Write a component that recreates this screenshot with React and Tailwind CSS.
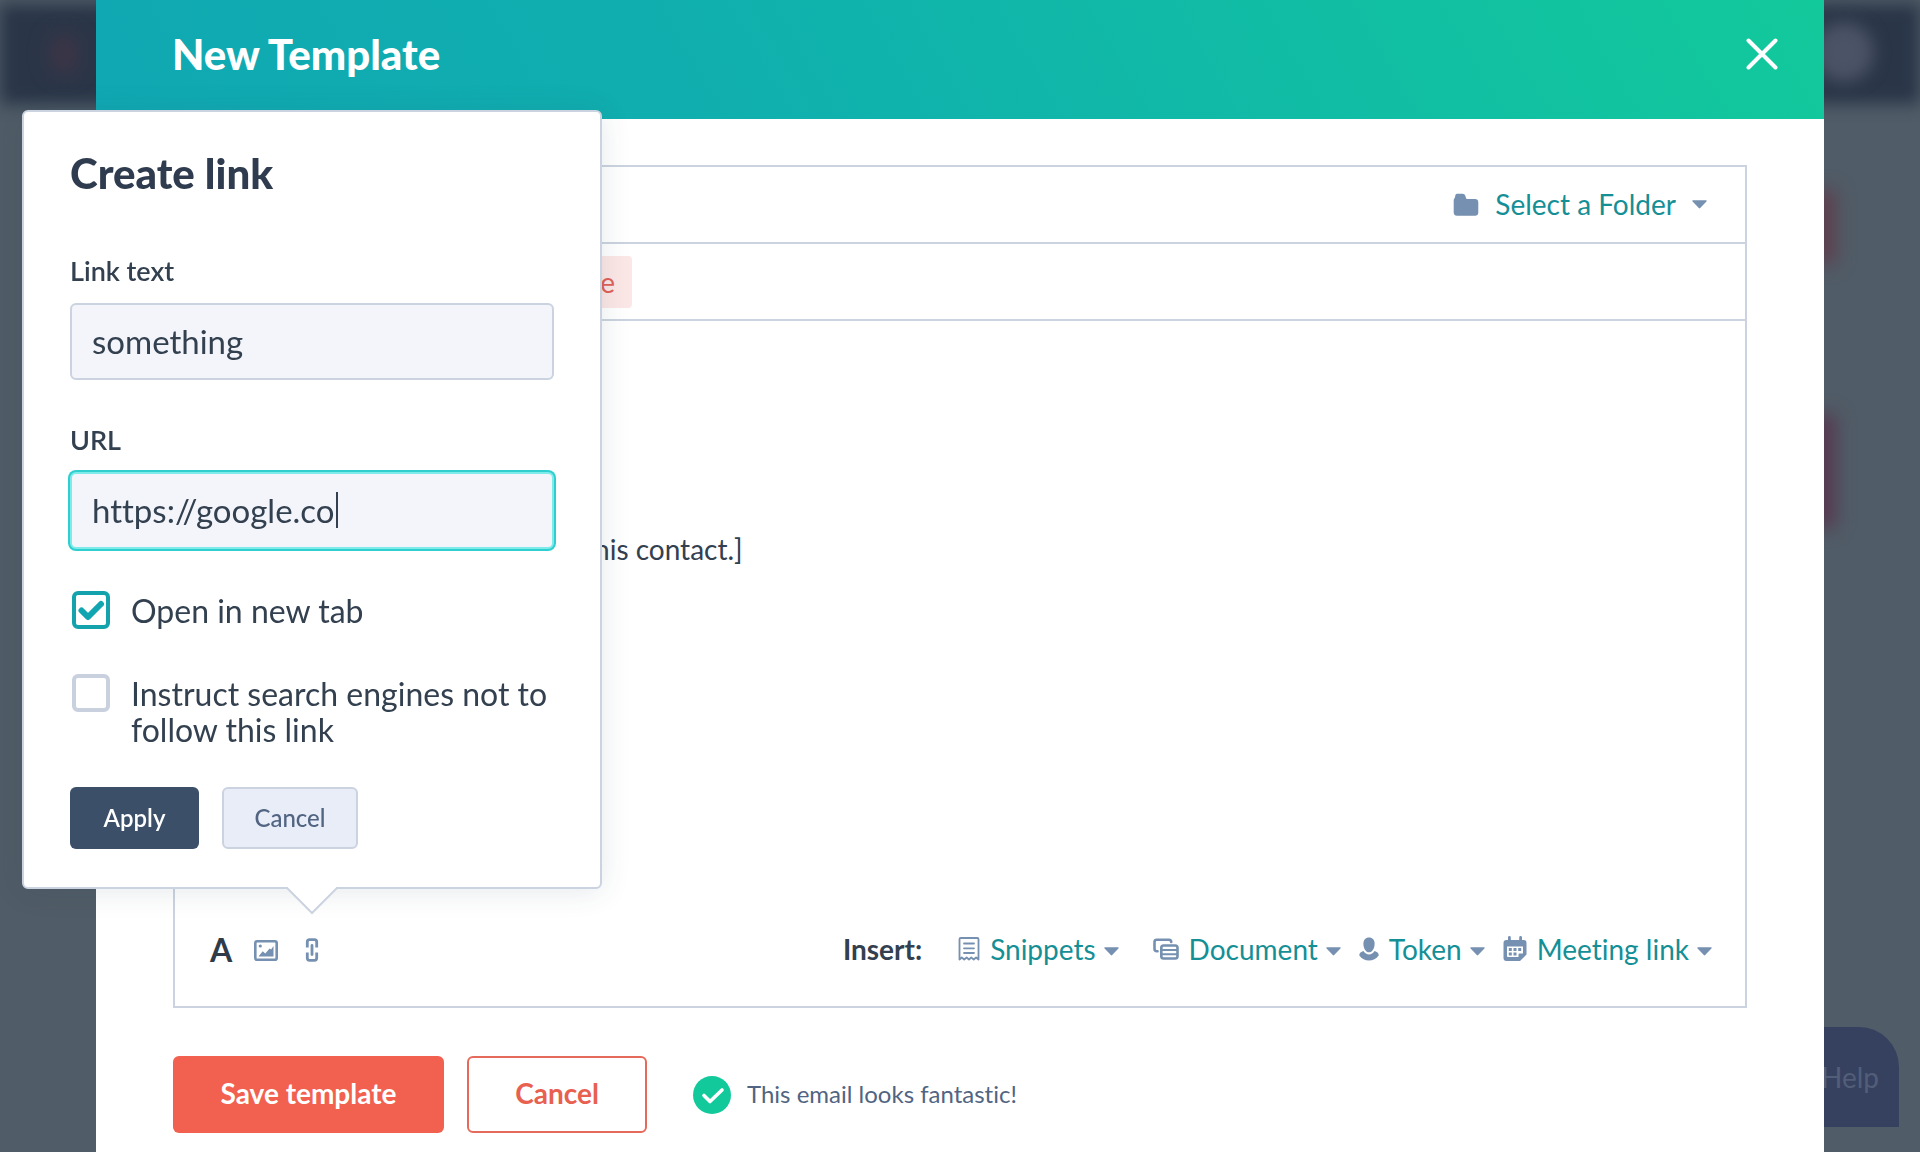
import { useState } from "react";

function Caret() {
  return (
    <svg width="15" height="9" viewBox="0 0 16 9" className="shrink-0 fill-[#7590b0]" aria-hidden="true">
      <path d="M1.2 0h13.6c.8 0 1.1.8.6 1.3L8.7 8.3a1 1 0 0 1-1.4 0L.6 1.3C.1.8.4 0 1.2 0z" />
    </svg>
  );
}

function FolderIcon() {
  return (
    <svg width="26" height="24" viewBox="0 0 26 24" className="shrink-0 fill-[#7590b0]" aria-hidden="true">
      <path d="M4.500.8h5c1.500 0 2.400.8 2.800 2l.7 2.200c.2.8.8 1.100 1.500 1.100H22c2 0 3.300 1.200 3.300 3.200v10.200c0 2-1.300 3.300-3.300 3.300H4C2 22.800.7 21.500.7 19.500V7.500C.7 6.300 1.200 5.600 1.900 4.800L2.300 2.600C2.500 1.400 3.300.8 4.500.8z" />
    </svg>
  );
}

function SnippetIcon() {
  return (
    <svg width="22" height="24" viewBox="0 0 22 24" fill="none" className="shrink-0 stroke-[#7590b0]" strokeWidth="1.800" strokeLinejoin="round" strokeLinecap="round" aria-hidden="true">
      <path d="M1.500 22.500V2.200c0-.8.4-1.200 1.200-1.200h16.600c.8 0 1.200.4 1.200 1.200v20.300l-2.400-2-2.400 2-2.400-2-2.300 2-2.400-2-2.400 2-2.400-2z" />
      <path d="M6 6.500h10M6 11.300h10M6 16h10" />
    </svg>
  );
}

function DocumentIcon() {
  return (
    <svg width="26" height="22" viewBox="0 0 26 22" fill="none" className="shrink-0 stroke-[#7590b0]" aria-hidden="true">
      <path d="M4.500 13.200H3.800C2.300 13.200 1.500 12.400 1.500 11V4c0-1.500.8-2.300 2.300-2.300H16c1.400 0 2.200.8 2.200 2.300" strokeWidth="2.600" strokeLinecap="round" />
      <rect x="8.300" y="7.500" width="16.200" height="13" rx="2.300" strokeWidth="2.600" />
      <path d="M8.300 12h16M8.300 16.200h16" strokeWidth="2" />
    </svg>
  );
}

function TokenIcon() {
  return (
    <svg width="20" height="24" viewBox="0 0 20 24" className="shrink-0 fill-[#7590b0]" aria-hidden="true">
      <path d="M10 .5c3.500 0 5.600 2.400 5.600 6.200 0 4.600-2.400 8.600-5.600 8.600s-5.600-4-5.600-8.600C4.400 2.900 6.500.5 10 .5z" />
      <path d="M4.400 14c1.500 2.400 3.400 3.400 5.600 3.400s4.100-1 5.600-3.400c2.400.7 4 2.200 4.200 4.200-2.600 3.700-5.900 5.300-9.800 5.300S2.800 21.900.2 18.200C.4 16.200 2 14.700 4.400 14z" />
    </svg>
  );
}

function CalendarIcon() {
  return (
    <svg width="24" height="26" viewBox="0 0 24 26" className="shrink-0" aria-hidden="true">
      <path className="fill-[#7590b0]" d="M5 1.500a1.400 1.400 0 0 1 2.800 0V4h8.400V1.500a1.400 1.400 0 0 1 2.800 0V4h1.500C22.500 4 23.500 5 23.500 7v11.500L17 25H3.500C1.500 25 .5 24 .5 22V7c0-2 1-3 3-3H5z" />
      <path className="fill-white" d="M4 10.500h16v7h-3.500a1 1 0 0 0-1 1V21H5a1 1 0 0 1-1-1z" />
      <path className="fill-[#7590b0]" d="M5.800 12h3v3h-3zM10.500 12h3v3h-3zM15.200 12h3v3h-3zM5.800 16.600h3v3h-3zM10.500 16.600h3v3h-3z" />
    </svg>
  );
}

function ImageIcon() {
  return (
    <svg width="24" height="21" viewBox="0 0 24 21" className="shrink-0" aria-hidden="true">
      <rect x="1.300" y="1.300" width="21.400" height="18.400" rx="1.800" fill="none" className="stroke-[#7590b0]" strokeWidth="2.600" />
      <path className="fill-[#7590b0]" d="M4.500 16.500l4.200-5.300 2.600 2.200 4.300-5 1.500 1L19.500 6v10.500z" />
      <circle cx="6.300" cy="6" r="1.600" className="fill-[#7590b0]" />
    </svg>
  );
}

function ChainIcon() {
  return (
    <svg width="14" height="24" viewBox="0 0 14 24" fill="none" className="shrink-0 stroke-[#7590b0]" strokeWidth="2.800" aria-hidden="true">
      <path d="M2.300 9.500V4c0-1.500.8-2.300 2.300-2.300h4.800c1.500 0 2.300.8 2.300 2.300v5.500" />
      <path d="M2.300 14.500V20c0 1.500.8 2.300 2.300 2.300h4.800c1.500 0 2.300-.8 2.300-2.300v-5.500" />
      <path d="M7 7.500v9" strokeLinecap="round" />
    </svg>
  );
}

function InsertMenu({ icon, label }) {
  return (
    <button type="button" aria-haspopup="menu" className="flex items-center gap-2 text-[28px] leading-9 text-[#158f96]">
      {icon}
      <span className="pl-[2px]">{label}</span>
      <span className="pt-1">
        <Caret />
      </span>
    </button>
  );
}

function Check({ label, checked, onChange }) {
  return (
    <label className="flex items-start gap-[21px]">
      <span className="relative ml-[2px] h-[38px] w-[38px] shrink-0">
        <input
          type="checkbox"
          checked={checked}
          onChange={onChange}
          className="block h-full w-full appearance-none rounded-md border-4 border-[#c9d1df] bg-white checked:border-[#14a3ad]"
        />
        {checked && (
          <svg viewBox="0 0 38 38" fill="none" className="pointer-events-none absolute inset-0 stroke-[#10a5b0]" strokeWidth="6" strokeLinecap="round" strokeLinejoin="round">
            <path d="M9.500 19.500l6.500 6.500 13-13" />
          </svg>
        )}
      </span>
      <span className="pt-[2px] text-[32px] leading-9">{label}</span>
    </label>
  );
}

function LinkPopover() {
  const [text, setText] = useState("something");
  const [url, setUrl] = useState("https://google.co");
  const [newTab, setNewTab] = useState(true);
  const [noFollow, setNoFollow] = useState(false);

  return (
    <div className="absolute bottom-full left-1/2 mb-[49px] w-[580px] -translate-x-1/2 rounded-md border-2 border-[#cbd3e0] bg-white px-[46px] pt-[37px] pb-[38px] text-[#33404f] shadow-[0_2px_30px_rgba(45,62,80,0.12)]">
      <form onSubmit={(e) => e.preventDefault()}>
        <h2 className="text-[42px] leading-[48px] font-black text-[#2f3b4e]">Create link</h2>

        <label htmlFor="link-text" className="mt-14 block text-[27px] leading-9 font-semibold">Link text</label>
        <input
          id="link-text"
          type="text"
          value={text}
          onChange={(e) => setText(e.target.value)}
          className="mt-[14px] block h-[77px] w-full rounded-md border-2 border-[#cbd3e0] bg-[#f3f5fa] px-5 pb-[2px] text-[33px] outline-none"
        />

        <label htmlFor="link-url" className="mt-[42px] block text-[27px] leading-9 font-semibold">URL</label>
        <div className="relative mt-[14px]">
          <input
            id="link-url"
            type="text"
            value={url}
            onChange={(e) => setUrl(e.target.value)}
            className="block h-[77px] w-full rounded-md border-2 border-[#7feaea] bg-[#f3f5fa] px-5 pb-[2px] text-[33px] ring-2 ring-[#30cfcf] outline-none"
          />
          <span className="absolute top-5 left-[266px] h-9 w-[2px] bg-[#33404f]" />
        </div>

        <div className="mt-[42px] space-y-[45px]">
          <Check label="Open in new tab" checked={newTab} onChange={(e) => setNewTab(e.target.checked)} />
          <Check label="Instruct search engines not to follow this link" checked={noFollow} onChange={(e) => setNoFollow(e.target.checked)} />
        </div>

        <div className="mt-[39px] flex gap-[23px]">
          <button type="submit" className="h-[62px] w-[129px] rounded-md bg-[#3c4f69] text-2xl font-semibold text-white">Apply</button>
          <button type="button" className="h-[62px] w-[136px] rounded-md border-2 border-[#cbd3e0] bg-[#e8edf7] text-2xl font-medium text-[#516482]">Cancel</button>
        </div>
      </form>

      <svg width="52" height="28" viewBox="0 0 52 28" className="absolute top-full left-1/2 -translate-x-1/2 fill-white stroke-[#cbd3e0]" strokeWidth="2">
        <path d="M0 -2L1 1l25 25L51 1l1-3" />
      </svg>
    </div>
  );
}

function Backdrop() {
  return (
    <div className="fixed inset-0 overflow-hidden bg-[#505c67]" aria-hidden="true">
      <div className="absolute inset-x-0 top-1 h-[100px] bg-[#2a3648] blur-[8px]" />
      <div className="absolute top-[34px] left-[50px] h-[40px] w-[28px] rounded-full bg-[#3e3546] blur-[10px]" />
      <div className="absolute top-[22px] right-[46px] h-[60px] w-[60px] rounded-full bg-[#4b5366] blur-[8px]" />
      <div className="absolute top-[190px] right-[84px] h-[74px] w-[60px] bg-[#5d404e] blur-[9px]" />
      <div className="absolute top-[414px] right-[84px] h-[114px] w-[60px] bg-[#563a51] blur-[9px]" />
      <div className="absolute right-[21px] bottom-[25px] flex h-[100px] w-[116px] items-center justify-end rounded-tl-[20px] rounded-tr-[40px] rounded-bl-[20px] bg-[#364160] pr-5 text-[28px] text-[#525e78]">
        Help
      </div>
    </div>
  );
}

export default function App() {
  return (
    <div className="min-h-screen font-['Lato',sans-serif] [font-variant-ligatures:none]">
      <Backdrop />

      <main className="relative mx-[5%] flex min-h-screen flex-col bg-white">
        <header className="flex h-[119px] items-center justify-between bg-[linear-gradient(60deg,#10a8b3,#10b0ae_38%,#12c99b)] pr-[46px] pb-3 pl-[76px]">
          <h1 className="text-[42px] leading-[48px] font-black text-white">New Template</h1>
          <button type="button" aria-label="Close">
            <svg width="32" height="32" viewBox="0 0 32 32" fill="none" className="stroke-white" strokeWidth="4" strokeLinecap="round">
              <path d="M2.500 2.500l27 27M29.500 2.500l-27 27" />
            </svg>
          </button>
        </header>

        <div className="flex flex-1 flex-col px-[77px] pt-[46px] pb-[19px]">
          <section className="flex flex-1 flex-col border-2 border-[#cbd3e0]">
            <div className="flex h-[77px] items-center justify-end gap-4 border-b-2 border-[#cbd3e0] pr-[38px]">
              <FolderIcon />
              <select aria-label="Folder" className="field-sizing-content appearance-none bg-transparent pb-[2px] text-[28px] leading-9 text-[#158f96] outline-none">
                <option>Select a Folder</option>
              </select>
              <Caret />
            </div>

            <div className="flex h-[77px] items-center border-b-2 border-[#cbd3e0] pl-[310px]">
              <span className="flex h-[52px] w-[147px] items-center justify-end rounded-sm bg-[#fbe7e6] pr-[17px] text-[28px] text-[#e05f58]">
                First name
              </span>
            </div>

            <div className="flex-1 pt-[210px] pl-[409px] text-[28px] leading-9 text-[#33404f]">this contact.]</div>

            <div className="flex h-28 items-center justify-between pr-[33px] pl-[35px]">
              <div className="flex items-center gap-6">
                <button type="button" aria-label="Text style" className="w-5 text-[32px] leading-9 font-bold text-[#2f3b48]">A</button>
                <button type="button" aria-label="Insert image">
                  <ImageIcon />
                </button>
                <div className="relative z-10 flex w-5 justify-center">
                  <button type="button" aria-label="Insert link">
                    <ChainIcon />
                  </button>
                  <LinkPopover />
                </div>
              </div>

              <div className="flex items-center gap-[18px] pb-[2px]">
                <span className="mr-[18px] text-[28px] leading-9 font-bold text-[#33404f]">Insert:</span>
                <div className="mr-4">
                  <InsertMenu icon={<SnippetIcon />} label="Snippets" />
                </div>
                <InsertMenu icon={<DocumentIcon />} label="Document" />
                <InsertMenu icon={<TokenIcon />} label="Token" />
                <InsertMenu icon={<CalendarIcon />} label="Meeting link" />
              </div>
            </div>
          </section>

          <footer className="mt-12 flex items-center">
            <button type="button" className="h-[77px] w-[271px] rounded-md bg-[#f2604f] pb-1 text-[28px] font-bold text-white">Save template</button>
            <button type="button" className="ml-[23px] h-[77px] w-[180px] rounded-md border-2 border-[#e66a5c] pb-1 text-[28px] font-bold text-[#e8604f]">Cancel</button>
            <svg width="38" height="38" viewBox="0 0 38 38" fill="none" className="ml-[46px]" aria-hidden="true">
              <circle cx="19" cy="19" r="19" className="fill-[#12c99b]" />
              <path d="M11 19.500l6 6 12-11.500" className="stroke-white" strokeWidth="3.600" strokeLinecap="round" strokeLinejoin="round" />
            </svg>
            <p className="ml-4 pb-[2px] text-2xl text-[#516482]">This email looks fantastic!</p>
          </footer>
        </div>
      </main>
    </div>
  );
}
